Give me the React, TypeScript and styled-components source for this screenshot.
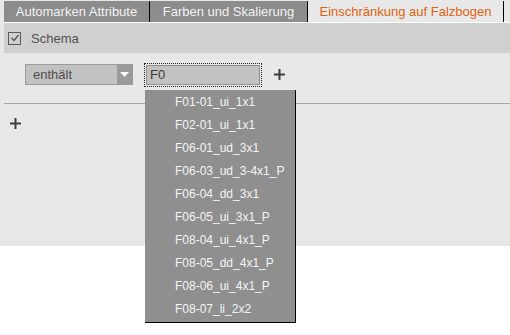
import styled, { createGlobalStyle } from "styled-components";

const GlobalStyle = createGlobalStyle`
  html, body {
    margin: 0;
    padding: 0;
    background: #ffffff;
  }
  body {
    font-family: "Liberation Sans", Arial, sans-serif;
  }
`;

const tabs = [
  { label: "Automarken Attribute", width: 145 },
  { label: "Farben und Skalierung", width: 157 },
  { label: "Einschränkung auf Falzbogen", width: 195, active: true },
];

const options = [
  "F01-01_ui_1x1",
  "F02-01_ui_1x1",
  "F06-01_ud_3x1",
  "F06-03_ud_3-4x1_P",
  "F06-04_dd_3x1",
  "F06-05_ui_3x1_P",
  "F08-04_ui_4x1_P",
  "F08-05_dd_4x1_P",
  "F08-06_ui_4x1_P",
  "F08-07_li_2x2",
];

const PlusIcon = () => (
  <svg width="11" height="11" viewBox="0 0 11 11">
    <rect x="0" y="4.5" width="11" height="2" fill="#3c3c3c" />
    <rect x="4.5" y="0" width="2" height="11" fill="#3c3c3c" />
  </svg>
);

const App = () => {
  return (
    <>
      <GlobalStyle />
      <WindowStyled>
        <PageStyled>
          <TabBarStyled>
            {tabs.map((t) => (
              <TabStyled key={t.label} $width={t.width} $active={!!t.active}>
                {t.label}
              </TabStyled>
            ))}
          </TabBarStyled>
          <HeaderStyled>
            <CheckboxStyled>
              <svg width="10" height="10" viewBox="0 0 10 10">
                <polyline
                  points="1.5,5 4,7.5 8.5,2"
                  fill="none"
                  stroke="#505050"
                  strokeWidth="1.3"
                />
              </svg>
            </CheckboxStyled>
            <HeaderLabelStyled>Schema</HeaderLabelStyled>
          </HeaderStyled>
          <FilterRowStyled>
            <SelectStyled>
              <SelectTextStyled>enthält</SelectTextStyled>
              <SelectArrowStyled>
                <svg width="9" height="5" viewBox="0 0 9 5">
                  <polygon points="0,0 9,0 4.5,5" fill="#ffffff" />
                </svg>
              </SelectArrowStyled>
            </SelectStyled>
            <InputFocusStyled>
              <InputStyled>F0</InputStyled>
            </InputFocusStyled>
            <PlusButtonStyled>
              <PlusIcon />
            </PlusButtonStyled>
          </FilterRowStyled>
          <DividerStyled />
          <AddRowStyled>
            <PlusIcon />
          </AddRowStyled>
        </PageStyled>
        <ListStyled>
          {options.map((o) => (
            <ListItemStyled key={o}>{o}</ListItemStyled>
          ))}
        </ListStyled>
      </WindowStyled>
    </>
  );
};

const WindowStyled = styled.div`
  position: relative;
  width: 510px;
  height: 335px;
  background-color: #ffffff;
`;

const PageStyled = styled.div`
  height: 246px;
  padding-top: 1px;
  box-sizing: border-box;
  background-color: #e8e8e8;
`;

const TabBarStyled = styled.div`
  display: flex;
  margin-left: 4px;
  border-bottom: 1px solid #ffffff;
`;

const TabStyled = styled.div<{ $width: number; $active: boolean }>`
  width: ${(p) => p.$width}px;
  height: 21px;
  display: flex;
  align-items: center;
  justify-content: center;
  border-right: 1px solid #000000;
  background-color: ${(p) => (p.$active ? "#e8e8e8" : "#8c8c8c")};
  color: ${(p) => (p.$active ? "#e2630f" : "#f2f2f2")};
  font-size: 13px;
  white-space: nowrap;
`;

const HeaderStyled = styled.div`
  display: flex;
  align-items: center;
  margin-left: 4px;
  height: 30px;
  padding-left: 4px;
  background-color: #d0d0d0;
`;

const CheckboxStyled = styled.div`
  width: 11px;
  height: 11px;
  border: 1px solid #5a5a5a;
  display: flex;
  align-items: center;
  justify-content: center;
`;

const HeaderLabelStyled = styled.span`
  margin-left: 10px;
  font-size: 13px;
  color: #505050;
`;

const FilterRowStyled = styled.div`
  display: flex;
  align-items: center;
  padding: 9px 0 0 25px;
  height: 25px;
`;

const SelectStyled = styled.div`
  display: flex;
  width: 108px;
  height: 21px;
  box-sizing: border-box;
  border: 1px solid #9a9a9a;
  background-color: #c2c2c2;
`;

const SelectTextStyled = styled.span`
  flex: 1;
  padding-left: 7px;
  font-size: 13px;
  line-height: 19px;
  color: #4e4e4e;
`;

const SelectArrowStyled = styled.div`
  width: 15px;
  display: flex;
  align-items: center;
  justify-content: center;
  background-color: #9a9a9a;
`;

const InputFocusStyled = styled.div`
  margin-left: 11px;
  padding: 1px;
  border: 1px dotted #222222;
`;

const InputStyled = styled.div`
  width: 114px;
  height: 20px;
  box-sizing: border-box;
  border: 1px solid #8e8e8e;
  background-color: #c2c2c2;
  padding-left: 3px;
  font-size: 13px;
  line-height: 18px;
  color: #3a3a3a;
`;

const PlusButtonStyled = styled.div`
  display: flex;
  margin-left: 12px;
`;

const DividerStyled = styled.div`
  margin: 16px 0 0 4px;
  height: 1px;
  background-color: #a8a8a8;
`;

const AddRowStyled = styled.div`
  display: flex;
  padding: 14px 0 0 10px;
`;

const ListStyled = styled.div`
  position: absolute;
  left: 145px;
  top: 90px;
  width: 150px;
  border-right: 1px solid #000000;
  border-bottom: 1px solid #000000;
  background-color: #8f8f8f;
  padding: 1px 0;
  z-index: 2;
`;

const ListItemStyled = styled.div`
  height: 23px;
  line-height: 23px;
  padding-left: 30px;
  font-size: 12px;
  color: #f4f4f4;
  white-space: nowrap;
`;

export default App;
